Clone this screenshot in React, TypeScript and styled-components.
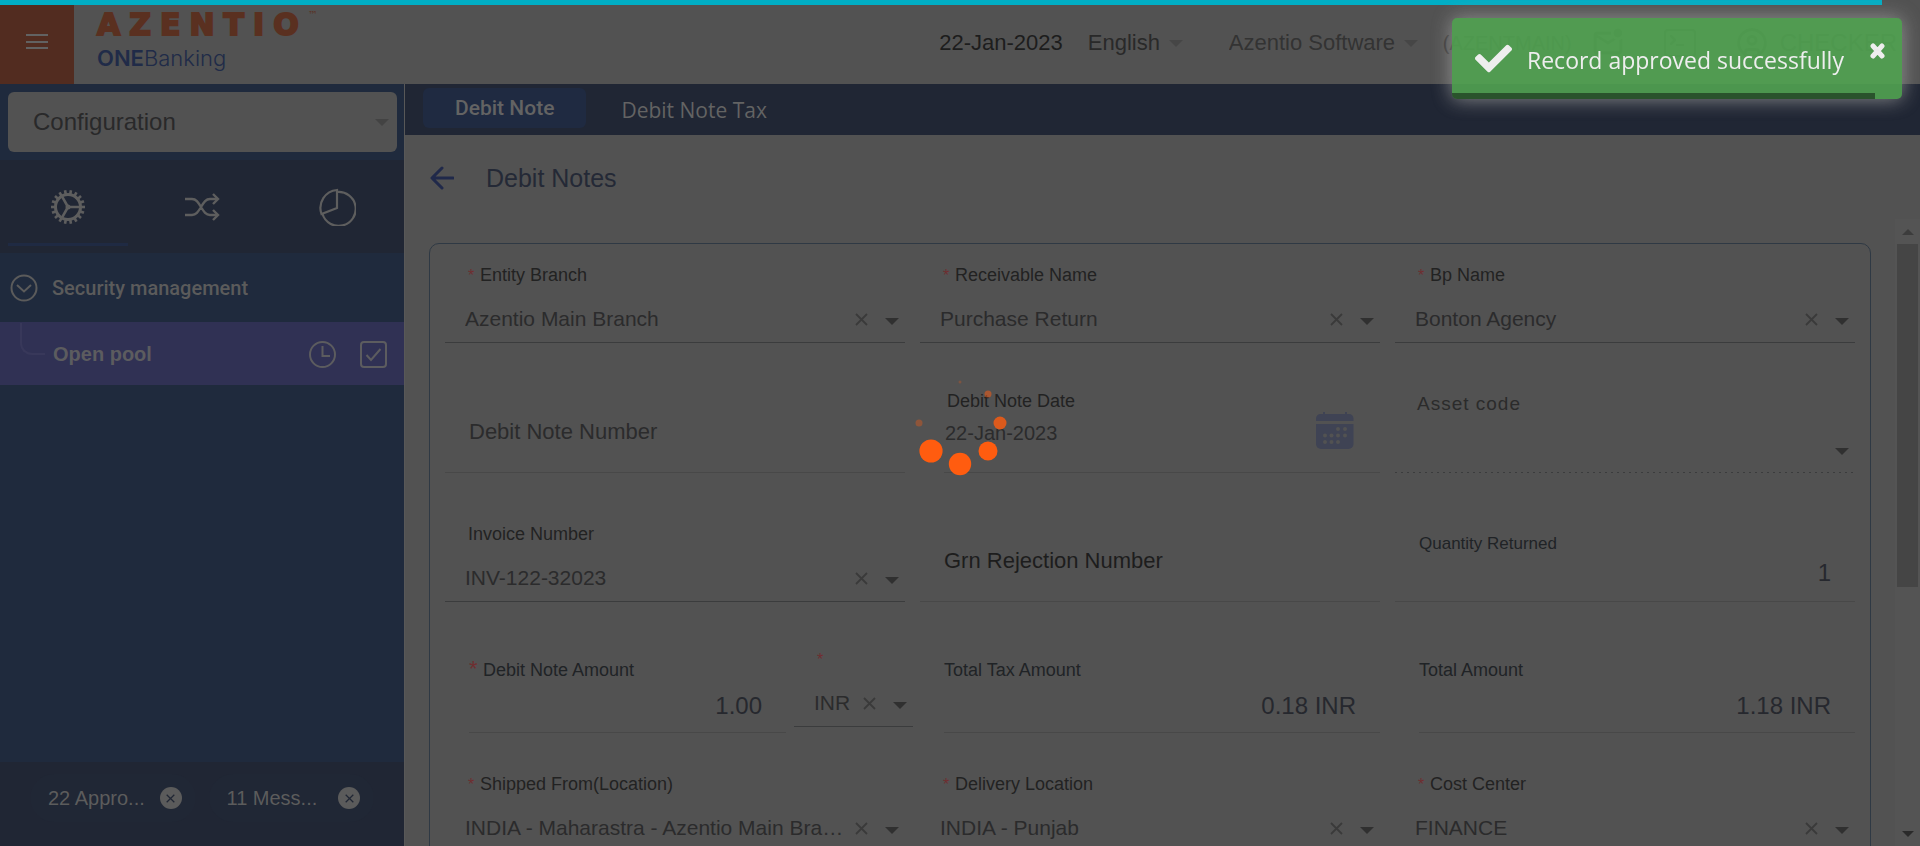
import React from 'react';
import styled, { createGlobalStyle, css } from 'styled-components';
import { MdOutlineMarkEmailUnread } from 'react-icons/md';
import { BsTerminal } from 'react-icons/bs';
import { FaCheck } from 'react-icons/fa';
import { LuCircleUser } from 'react-icons/lu';

const c = {
  page: '#525252',
  navy: '#202634',
  blue: '#1f2a3d',
  active: '#303154',
  brand: '#522c20',
  ink: '#222222',
  value: '#2b2b2c',
  amount: '#26282e',
  caret: '#303030',
  line: '#3b3c3d',
  faintLine: '#484848',
  paleText: '#5c5c5c',
  required: '#6f2e30',
};

const sans = '"Liberation Sans", Arial, sans-serif';

const GlobalStyle = createGlobalStyle`
  * { box-sizing: border-box; }
  body { margin: 0; background: ${c.page}; color: ${c.ink}; font-family: ${sans}; }
  button, input, select { margin: 0; padding: 0; border: 0; background: none; font-family: inherit; color: inherit; outline: 0; border-radius: 0; }
  svg { display: block; flex: none; }
`;

const Shell = styled.div`
  display: flex;
  flex-direction: column;
  height: 100vh;
  overflow: hidden;
`;

const LoadBar = styled.div`
  position: fixed;
  top: 0;
  left: 0;
  width: 98%;
  height: 5px;
  background: #00aec5;
  z-index: 3;
`;

/* Header */
const Header = styled.header`
  display: flex;
  flex: none;
  height: 84px;
`;

const MenuButton = styled.button`
  display: grid;
  place-items: center;
  width: 74px;
  background: ${c.brand};
  color: #626262;
`;

const Brand = styled.div`
  display: flex;
  flex-direction: column;
  padding: 9px 0 0 23px;
  font-family: Inter, sans-serif;
`;

const BrandName = styled.div`
  display: flex;
  color: #5a3020;
  font-family: "DejaVu Sans", sans-serif;
  font-size: 30px;
  font-weight: 700;
  line-height: 32px;
  letter-spacing: 9px;
  -webkit-text-stroke: 2px #5a3020;
`;

const TradeMark = styled.span`
  font-size: 10px;
  font-weight: 400;
  line-height: 12px;
  letter-spacing: 0;
  -webkit-text-stroke: 0;
`;

const Product = styled.div`
  color: #202b48;
  font-size: 22px;
  font-weight: 300;
  line-height: 24px;
  margin-top: 5px;
  b { font-weight: 600; }
`;

const HeaderTools = styled.div`
  display: flex;
  align-items: center;
  margin-left: auto;
  padding: 2px 23px 0 0;
  font-size: 22px;
`;

const Today = styled.span`
  margin-right: 25px;
  color: #1d1d1d;
`;

const HeaderPicker = styled.div<{ $gap: number }>`
  display: flex;
  align-items: center;
  gap: 8px;
  margin-right: ${p => p.$gap}px;
  color: #464646;
`;

const HeaderSelect = styled.select<{ $soft?: boolean }>`
  appearance: none;
  font-size: 22px;
  line-height: 28px;
  color: ${p => (p.$soft ? '#333333' : '#292929')};
`;

const Branch = styled.span`
  font-size: 20px;
  color: #333333;
`;

const HeaderIcon = styled.button`
  display: grid;
  place-items: center;
  width: 34px;
  height: 34px;
  margin: 0 19px;
  color: #333333;
`;

const User = styled.button`
  display: flex;
  align-items: center;
  gap: 12px;
  margin-left: 20px;
  font-size: 24px;
  color: #333333;
`;

/* Body */
const Body = styled.div`
  display: flex;
  flex: 1;
  min-height: 0;
`;

const Sidebar = styled.aside`
  display: flex;
  flex-direction: column;
  flex: none;
  width: 405px;
  border-right: 1px solid #585858;
  background: ${c.blue};
`;

const ModulePicker = styled.div`
  display: flex;
  align-items: center;
  height: 60px;
  margin: 8px 7px 8px 8px;
  padding: 0 8px 0 25px;
  border-radius: 6px;
  background: ${c.page};
  color: #434343;
`;

const ModuleSelect = styled.select`
  appearance: none;
  flex: 1;
  font-size: 24px;
  line-height: 30px;
  color: #29292a;
`;

const ModuleTabs = styled.nav`
  display: grid;
  grid-template-columns: repeat(3, 1fr);
  height: 93px;
  padding-bottom: 7px;
  background: ${c.navy};
`;

const ModuleTab = styled.button<{ $active?: boolean }>`
  display: grid;
  place-items: center;
  margin: 0 7px 0 8px;
  padding-top: 11px;
  border-bottom: 3px solid ${p => (p.$active ? '#1f2a43' : 'transparent')};
  color: #5e5e5e;
`;

const GroupRow = styled.button`
  display: flex;
  align-items: center;
  gap: 14px;
  height: 69px;
  padding-left: 10px;
  color: #5b5b5b;
  font: 500 20px/28px Roboto, sans-serif;
`;

const OpenRow = styled.div`
  display: flex;
  align-items: center;
  height: 63px;
  padding: 1px 17px 0 20px;
  background: ${c.active};
  color: #5c5c5f;
`;

const Branching = styled.span`
  align-self: flex-start;
  width: 25px;
  height: 32px;
  margin-right: 8px;
  border: solid #38385a;
  border-width: 0 0 2px 2px;
  border-bottom-left-radius: 12px;
`;

const OpenLink = styled.a`
  flex: 1;
  color: inherit;
  font-size: 20px;
  font-weight: 700;
  line-height: 28px;
  text-decoration: none;
`;

const RowIcon = styled.button`
  margin-left: 24px;
`;

const ChipBar = styled.div`
  display: flex;
  gap: 13px;
  height: 84px;
  margin-top: auto;
  padding: 12px 30px;
  background: ${c.navy};
`;

const Chip = styled.div`
  display: flex;
  align-items: center;
  justify-content: space-between;
  width: 167px;
  height: 48px;
  padding: 0 14px 0 18px;
  border-radius: 24px;
  background: #202735;
  color: ${c.paleText};
  font-size: 20px;
`;

const ChipClose = styled.button`
  display: grid;
  place-items: center;
  width: 22px;
  height: 22px;
  border-radius: 50%;
  background: #5b5b5b;
  color: ${c.navy};
`;

/* Main */
const Main = styled.main`
  display: flex;
  flex-direction: column;
  flex: 1;
  min-width: 0;
`;

const TabBar = styled.nav`
  display: flex;
  align-items: flex-start;
  flex: none;
  height: 51px;
  padding: 4px 18px;
  background: ${c.navy};
`;

const Tab = styled.button<{ $active?: boolean }>`
  height: 40px;
  padding: 0 32px;
  border-radius: 6px;
  color: #636363;
  ${p =>
    p.$active
      ? css`background: #1f2a41; font: 500 21px/28px Roboto, sans-serif; margin-right: 3px;`
      : css`font: 400 21px/28px "Open Sans", sans-serif; padding-top: 3px;`}
`;

const TitleBar = styled.div`
  display: flex;
  align-items: center;
  gap: 32px;
  flex: none;
  height: 84px;
  padding: 2px 25px 0;
`;

const BackButton = styled.button`
  color: #20294a;
`;

const Title = styled.h1`
  margin: 0;
  color: #242936;
  font-size: 25px;
  font-weight: 400;
  line-height: 32px;
`;

const ScrollArea = styled.div`
  display: flex;
  flex: 1;
  min-height: 0;
  overflow: hidden;
`;

const Form = styled.form`
  display: grid;
  grid-template-columns: repeat(3, minmax(0, 1fr));
  grid-template-rows: 99px 130px 129px 131px 119px;
  align-items: end;
  column-gap: 15px;
  flex: 1;
  align-self: flex-start;
  margin: 24px;
  padding: 0 15px 40px;
  border: 1px solid #2f3944;
  border-radius: 10px;
`;

const Scrollbar = styled.div`
  display: flex;
  flex-direction: column;
  align-items: center;
  width: 25px;
  padding: 10px 2px 9px;
  background: #545454;
`;

const Thumb = styled.div`
  width: 21px;
  height: 343px;
  margin: 9px 0 auto;
  background: #454545;
`;

/* Fields */
const Star = styled.span<{ $bold?: boolean }>`
  display: inline-block;
  width: ${p => (p.$bold ? 14 : 12)}px;
  color: ${c.required};
  font-size: ${p => (p.$bold ? 22 : 16)}px;
  line-height: 16px;
`;

const Label = styled.label<{ $size?: number }>`
  display: block;
  height: 24px;
  font-size: ${p => p.$size ?? 18}px;
  line-height: 24px;
  white-space: nowrap;
`;

const SelectBox = styled.div<{ $narrow?: boolean }>`
  min-width: 0;
  ${p => p.$narrow && css`width: 119px; margin: 0 -8px 6px 8px;`}
  ${Label} { margin: 0 0 20px 23px; }
`;

const SelectRow = styled.div<{ $dashed?: boolean }>`
  display: flex;
  align-items: center;
  padding: 0 6px 11px 20px;
  ${p =>
    p.$dashed
      ? css`
          padding-bottom: 12px;
          background: repeating-linear-gradient(90deg, ${c.line} 0 2px, transparent 2px 6px) bottom / 100% 1px no-repeat;
        `
      : css`border-bottom: 1px solid ${c.line};`}
`;

const Select = styled.select<{ $narrow?: boolean }>`
  appearance: none;
  flex: 1;
  min-width: 0;
  height: 24px;
  margin-right: ${p => (p.$narrow ? 9 : 11)}px;
  color: ${c.value};
  font-size: 21px;
  line-height: 24px;
  overflow: hidden;
  text-overflow: ellipsis;
  white-space: nowrap;
`;

const ClearButton = styled.button`
  margin-right: 17px;
  color: #3a3a3a;
`;

const AssetLabel = styled(Label)`
  && { margin: 0 0 21px 22px; letter-spacing: 1px; color: #2b2b2b; }
`;

const TextInput = styled.input<{ $soft?: boolean }>`
  width: 100%;
  height: 54px;
  padding: 0 24px 27px;
  border-bottom: 1px solid ${c.faintLine};
  font-size: 22px;
  line-height: 26px;
  &::placeholder { color: ${p => (p.$soft ? c.value : '#1d1d1d')}; opacity: 1; }
`;

const DateBox = styled.div`
  display: flex;
  align-items: flex-end;
  margin-left: 24px;
  padding: 0 26px 22px 1px;
  border-bottom: 1px solid ${c.faintLine};
  color: #3f4354;
`;

const DateText = styled.div`
  flex: 1;
  padding-bottom: 5px;
  ${Label} { margin: 0 0 8px 2px; color: ${c.ink}; }
`;

const DateInput = styled.input`
  display: block;
  width: 100%;
  height: 24px;
  color: ${c.value};
  font-size: 20px;
  line-height: 24px;
`;

const AmountBox = styled.div<{ $wide?: boolean }>`
  flex: 1;
  min-width: 0;
  margin-left: ${p => (p.$wide ? 0 : 24)}px;
  padding: 0 24px ${p => (p.$wide ? 14 : 12)}px ${p => (p.$wide ? 24 : 0)}px;
  border-bottom: 1px solid ${c.faintLine};
  color: #202326;
`;

const AmountInput = styled.input<{ $gap: number }>`
  display: block;
  width: 100%;
  height: 28px;
  margin-top: ${p => p.$gap}px;
  color: ${c.amount};
  font-size: 24px;
  line-height: 28px;
  text-align: right;
`;

const SplitCell = styled.div`
  display: flex;
  align-items: flex-end;
`;

/* Overlays */
const Spinner = styled.div`
  position: fixed;
  inset: 0;
  display: grid;
  place-items: center;
  pointer-events: none;
  z-index: 2;
`;

const Toast = styled.div`
  position: fixed;
  top: 18px;
  right: 18px;
  display: flex;
  align-items: center;
  width: 450px;
  height: 81px;
  padding: 0 17px 0 23px;
  border-radius: 5px;
  background: #51a351;
  box-shadow: 0 0 20px #999999;
  color: #ffffff;
  opacity: 0.9;
  overflow: hidden;
  z-index: 4;
`;

const ToastText = styled.span`
  flex: 1;
  padding: 2px 0 0 15px;
  font: 400 23px/32px "Open Sans", sans-serif;
  white-space: nowrap;
`;

const ToastClose = styled.button`
  align-self: flex-start;
  padding-top: 25px;
`;

const ToastProgress = styled.div`
  position: absolute;
  left: 0;
  bottom: 0;
  width: 94%;
  height: 6px;
  background: #000000;
  opacity: 0.45;
`;

const Caret = () => (
  <svg width="14" height="7" viewBox="0 0 14 7" fill="currentColor" aria-hidden="true">
    <path d="M0 0h14L7 7z" />
  </svg>
);

const Cross = ({ size = 13 }: { size?: number }) => (
  <svg width={size} height={size} viewBox="0 0 13 13" stroke="currentColor" strokeWidth="1.8" aria-hidden="true">
    <path d="M1 1l11 11M12 1L1 12" />
  </svg>
);

const teeth = Array.from({ length: 18 }, (_, i) => i * 20);

const GearIcon = () => (
  <svg width="34" height="34" viewBox="-17 -17 34 34" fill="none" stroke="currentColor" aria-hidden="true">
    <circle r="12.5" strokeWidth="3" />
    {teeth.map(a => (
      <path key={a} d="M0 -13V-17" strokeWidth="2.6" transform={`rotate(${a + 10})`} />
    ))}
    <path d="M0 0H12M0 0L-6 -10.6M0 0L-6 10.6" strokeWidth="2.6" />
    <circle r="1.5" strokeWidth="2" />
  </svg>
);

const ShuffleIcon = () => (
  <svg width="36" height="28" viewBox="0 0 36 28" fill="none" stroke="currentColor" strokeWidth="2.4" aria-hidden="true">
    <path d="M1 6h7c4 0 6 3 9 8s5 8 9 8h7M1 22h7c4 0 6-3 9-8s5-8 9-8h7" />
    <path d="M29 1l5 5-5 5M29 17l5 5-5 5" />
  </svg>
);

const PieIcon = () => (
  <svg width="38" height="38" viewBox="0 0 38 38" fill="none" stroke="currentColor" strokeWidth="2.2" aria-hidden="true">
    <path d="M19 2v18L3.500 26A18 18 0 0 1 19 2z" />
    <path d="M19 4a17 17 0 1 1-14.500 22" />
  </svg>
);

const Calendar = () => (
  <svg width="38" height="38" viewBox="0 0 38 38" fill="currentColor" aria-hidden="true">
    <path d="M7 0h2v2h20V0h2v2h2a4.500 4.500 0 0 1 4.500 4.500V9H0V6.500A4.500 4.500 0 0 1 4.500 2H7z" />
    <path d="M0 12h37.500v20a5 5 0 0 1-5 5H5a5 5 0 0 1-5-5z" />
    <g fill={c.page}>
      {[[22, 17], [29, 17], [9, 23.5], [15.5, 23.5], [22, 23.5], [29, 23.5], [9, 30], [15.5, 30], [22, 30]].map(([x, y]) => (
        <circle key={`${x}-${y}`} cx={x} cy={y} r="2" />
      ))}
    </g>
  </svg>
);

const CaretTint = styled.span`
  padding-top: 4px;
  color: ${c.caret};
`;

const SelectCaret = () => <CaretTint><Caret /></CaretTint>;

function SelectField({ id, label, value, required, narrow }: { id: string; label: string; value: string; required?: boolean; narrow?: boolean }) {
  return (
    <SelectBox $narrow={narrow}>
      <Label htmlFor={id}>
        {required && <Star>*</Star>}
        {label}
      </Label>
      <SelectRow>
        <Select id={id} $narrow={narrow} aria-label={label || 'Currency'}>
          <option>{value}</option>
        </Select>
        <ClearButton type="button" aria-label="Clear"><Cross /></ClearButton>
        <SelectCaret />
      </SelectRow>
    </SelectBox>
  );
}

function AmountField({ id, label, value, required, quantity }: { id: string; label: string; value: string; required?: boolean; quantity?: boolean }) {
  return (
    <AmountBox $wide={quantity}>
      <Label htmlFor={id} $size={quantity ? 17 : 18}>
        {required && <Star $bold>*</Star>}
        {label}
      </Label>
      <AmountInput id={id} defaultValue={value} $gap={quantity ? 3 : 10} />
    </AmountBox>
  );
}

export default function App() {
  return (
    <Shell>
      <GlobalStyle />
      <LoadBar />
      <Header>
        <MenuButton aria-label="Menu">
          <svg width="24" height="18" viewBox="0 0 24 18" stroke="currentColor" strokeWidth="2" aria-hidden="true">
            <path d="M1 2h22M1 9h22M1 15h22" />
          </svg>
        </MenuButton>
        <Brand>
          <BrandName>AZENTIO<TradeMark>™</TradeMark></BrandName>
          <Product><b>ONE</b>Banking</Product>
        </Brand>
        <HeaderTools>
          <Today>22-Jan-2023</Today>
          <HeaderPicker $gap={46}>
            <HeaderSelect aria-label="Language"><option>English</option></HeaderSelect>
            <Caret />
          </HeaderPicker>
          <HeaderPicker $gap={25}>
            <HeaderSelect $soft aria-label="Company"><option>Azentio Software</option></HeaderSelect>
            <Caret />
          </HeaderPicker>
          <Branch>(AZENTMAIN)</Branch>
          <HeaderIcon aria-label="Messages"><MdOutlineMarkEmailUnread size={34} /></HeaderIcon>
          <HeaderIcon aria-label="Console"><BsTerminal size={32} /></HeaderIcon>
          <User><LuCircleUser size={32} />CHECKER</User>
        </HeaderTools>
      </Header>
      <Body>
        <Sidebar>
          <ModulePicker>
            <ModuleSelect aria-label="Module"><option>Configuration</option></ModuleSelect>
            <Caret />
          </ModulePicker>
          <ModuleTabs>
            <ModuleTab $active aria-label="Settings"><GearIcon /></ModuleTab>
            <ModuleTab aria-label="Transactions"><ShuffleIcon /></ModuleTab>
            <ModuleTab aria-label="Reports"><PieIcon /></ModuleTab>
          </ModuleTabs>
          <GroupRow>
            <svg width="28" height="28" viewBox="0 0 28 28" fill="none" stroke="currentColor" strokeWidth="2" aria-hidden="true">
              <circle cx="14" cy="14" r="12.500" />
              <path d="M7 11l7 6.500L21 11" />
            </svg>
            Security management
          </GroupRow>
          <OpenRow>
            <Branching />
            <OpenLink href="#">Open pool</OpenLink>
            <RowIcon aria-label="History">
              <svg width="27" height="27" viewBox="0 0 27 27" fill="none" stroke="currentColor" strokeWidth="2" aria-hidden="true">
                <circle cx="13.500" cy="13.500" r="12.500" />
                <path d="M13.500 5v10h7.500" />
              </svg>
            </RowIcon>
            <RowIcon aria-label="Approve">
              <svg width="27" height="27" viewBox="0 0 27 27" fill="none" stroke="currentColor" strokeWidth="2" aria-hidden="true">
                <rect x="1" y="1" width="25" height="25" rx="3" />
                <path d="M6.500 14l4.500 5 9.500-11" />
              </svg>
            </RowIcon>
          </OpenRow>
          <ChipBar>
            <Chip>22 Appro...<ChipClose aria-label="Close approvals"><Cross size={9} /></ChipClose></Chip>
            <Chip>11 Mess...<ChipClose aria-label="Close messages"><Cross size={9} /></ChipClose></Chip>
          </ChipBar>
        </Sidebar>
        <Main>
          <TabBar>
            <Tab $active>Debit Note</Tab>
            <Tab>Debit Note Tax</Tab>
          </TabBar>
          <TitleBar>
            <BackButton aria-label="Back">
              <svg width="24" height="24" viewBox="0 0 24 24" fill="none" stroke="currentColor" strokeWidth="3" strokeLinecap="round" strokeLinejoin="round" aria-hidden="true">
                <path d="M12 2L2 12l10 10M3 12h20" />
              </svg>
            </BackButton>
            <Title>Debit Notes</Title>
          </TitleBar>
          <ScrollArea>
            <Form>
              <SelectField id="branch" label="Entity Branch" value="Azentio Main Branch" required />
              <SelectField id="receivable" label="Receivable Name" value="Purchase Return" required />
              <SelectField id="bp" label="Bp Name" value="Bonton Agency" required />

              <TextInput $soft placeholder="Debit Note Number" aria-label="Debit Note Number" />
              <DateBox>
                <DateText>
                  <Label htmlFor="date">Debit Note Date</Label>
                  <DateInput id="date" defaultValue="22-Jan-2023" />
                </DateText>
                <Calendar />
              </DateBox>
              <SelectBox>
                <AssetLabel htmlFor="asset" $size={19}>Asset code</AssetLabel>
                <SelectRow $dashed>
                  <Select id="asset"><option></option></Select>
                  <SelectCaret />
                </SelectRow>
              </SelectBox>

              <SelectField id="invoice" label="Invoice Number" value="INV-122-32023" />
              <TextInput placeholder="Grn Rejection Number" aria-label="Grn Rejection Number" />
              <AmountField id="quantity" label="Quantity Returned" value="1" quantity />

              <SplitCell>
                <AmountField id="amount" label="Debit Note Amount" value="1.00" required />
                <SelectField id="currency" label="" value="INR" required narrow />
              </SplitCell>
              <AmountField id="tax" label="Total Tax Amount" value="0.18 INR" />
              <AmountField id="total" label="Total Amount" value="1.18 INR" />

              <SelectField id="from" label="Shipped From(Location)" value="INDIA - Maharastra - Azentio Main Branch" required />
              <SelectField id="delivery" label="Delivery Location" value="INDIA - Punjab" required />
              <SelectField id="cost" label="Cost Center" value="FINANCE" required />
            </Form>
            <Scrollbar aria-hidden="true">
              <svg width="12" height="6" viewBox="0 0 12 6" fill="#3c3c3c"><path d="M0 6h12L6 0z" /></svg>
              <Thumb />
              <svg width="12" height="6" viewBox="0 0 12 6" fill="#2a2a2a"><path d="M0 0h12L6 6z" /></svg>
            </Scrollbar>
          </ScrollArea>
        </Main>
      </Body>
      <Spinner role="status" aria-label="Loading">
        <svg width="110" height="110" viewBox="-55 -55 110 110" fill="#ff5c0f">
          <circle cx="0" cy="-41" r="1.500" opacity="0.25" />
          <circle cx="28" cy="-29" r="3.500" opacity="0.5" />
          <circle cx="40" cy="0" r="6.500" opacity="0.8" />
          <circle cx="28" cy="28" r="9.500" />
          <circle cx="0" cy="41" r="11.200" />
          <circle cx="-29" cy="28" r="11.600" />
          <circle cx="-41" cy="0" r="3.500" opacity="0.35" />
        </svg>
      </Spinner>
      <Toast role="alert">
        <FaCheck size={37} />
        <ToastText>Record approved successfully</ToastText>
        <ToastClose aria-label="Dismiss">
          <svg width="15" height="16" viewBox="0 0 15 16" stroke="currentColor" strokeWidth="5" strokeLinecap="round" aria-hidden="true">
            <path d="M3 3l9 10M12 3L3 13" />
          </svg>
        </ToastClose>
        <ToastProgress />
      </Toast>
    </Shell>
  );
}
